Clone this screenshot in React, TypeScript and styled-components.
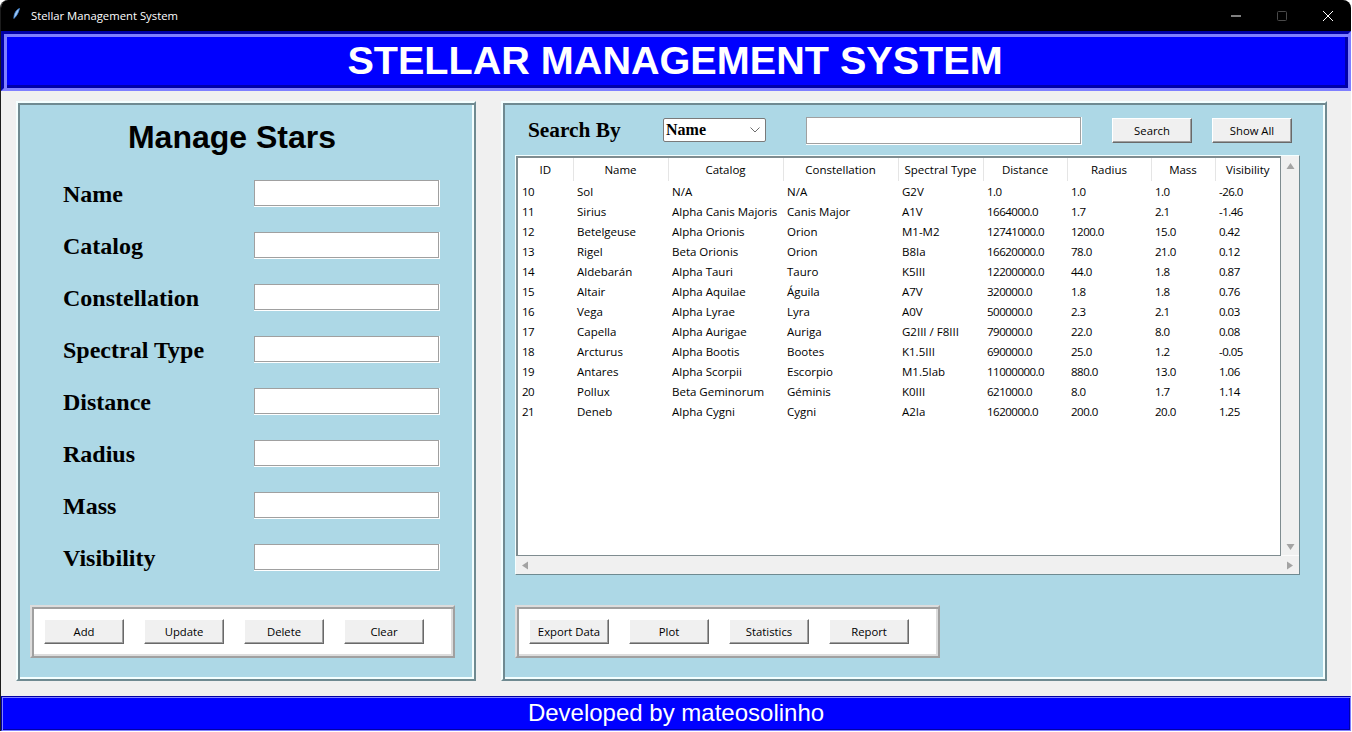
import React from "react";
import styled, { createGlobalStyle, css } from "styled-components";

const GlobalStyle = createGlobalStyle`
  * { box-sizing: border-box; }
  html, body { margin: 0; padding: 0; background: #fff; }
  body { font-family: "Open Sans", "Liberation Sans", sans-serif; }
`;

const ridge = (light: string, dark: string, size = 2) => css`
  border: ${size}px solid;
  border-color: ${light} ${dark} ${dark} ${light};
  box-shadow: inset ${size}px ${size}px 0 ${dark}, inset -${size}px -${size}px 0 ${light};
`;

const groove = (light: string, dark: string, size = 3) => css`
  border: ${size}px solid;
  border-color: ${dark} ${light} ${light} ${dark};
  box-shadow: inset ${size}px ${size}px 0 ${light}, inset -${size}px -${size}px 0 ${dark};
`;

const Window = styled.div`
  width: 1351px;
  height: 731px;
  display: flex;
  flex-direction: column;
  background: #f0f0f0;
  border-left: 1px solid #1c1c1c;
  border-radius: 8px 8px 0 0;
  overflow: hidden;
`;

const TitleBar = styled.div`
  height: 31px;
  flex: none;
  background: #000;
  color: #fff;
  display: flex;
  align-items: center;
  padding-left: 12px;
`;

const AppIcon = styled.svg`
  width: 7px;
  height: 11px;
  margin-right: 11px;
  margin-top: -4px;
`;

const WindowTitle = styled.span`
  flex: 1;
  font-family: "Open Sans", sans-serif;
  font-size: 11.3px;
`;

const WindowControl = styled.div`
  width: 46px;
  height: 31px;
  display: flex;
  align-items: center;
  justify-content: center;
`;

const Banner = styled.div`
  height: 60px;
  flex: none;
  background: #0000ff;
  ${groove("#7f7fff", "#0000a8")}
  color: #fff;
  font-family: "Liberation Sans", Arial, sans-serif;
  font-weight: 700;
  font-size: 39.6px;
  display: flex;
  align-items: center;
  justify-content: center;
  padding: 0 2px 2px 0;
`;

const Main = styled.div`
  flex: 1;
  display: flex;
  align-items: flex-start;
  gap: 25px;
  padding: 10px 0 0 15px;
`;

const Panel = styled.section<{ $width: number }>`
  width: ${(p) => p.$width}px;
  height: 580px;
  flex: none;
  background: #add8e6;
  ${ridge("#f4ffff", "#6f8a91")}
`;

const LeftPanel = styled(Panel)`
  display: flex;
  flex-direction: column;
  padding: 2px 2px 21px 12px;
`;

const PanelHeading = styled.h1`
  margin: 12px 0 0;
  padding-right: 38px;
  height: 51px;
  line-height: 40px;
  text-align: center;
  font-family: "Liberation Sans", Arial, sans-serif;
  font-weight: 700;
  font-size: 32px;
  color: #000;
`;

const FormRows = styled.div`
  padding: 0 0 0 33px;
`;

const FormRow = styled.div`
  height: 52px;
  display: grid;
  grid-template-columns: 191px 185px;
  align-items: center;
`;

const serifLabel = css`
  font-family: "Liberation Serif", "Times New Roman", serif;
  font-weight: 700;
  color: #000;
`;

const FieldLabel = styled.label`
  ${serifLabel}
  font-size: 24px;
`;

const TextField = styled.input`
  display: block;
  padding: 0 3px;
  border: 1px solid #a0a0a0;
  background: #fff;
  box-shadow: 0 1px 0 #fff, 1px 0 0 #fff, 1px 1px 0 #fff;
  outline: none;
`;

const FormField = styled(TextField)`
  width: 185px;
  height: 26px;
  margin-bottom: 2px;
`;

const ButtonFrame = styled.div<{ $width: number }>`
  width: ${(p) => p.$width}px;
  height: 53px;
  background: #fff;
  ${ridge("#dcdcdc", "#a0a0a0")}
  display: flex;
  align-items: center;
  gap: 20px;
  padding-left: 12px;
`;

const LeftButtons = styled(ButtonFrame)`
  margin-top: auto;
`;

const Button = styled.button`
  width: 80px;
  height: 25px;
  flex: none;
  padding: 0;
  background: #f0f0f0;
  border: 1px solid;
  border-color: #fff #696969 #696969 #fff;
  box-shadow: inset -1px -1px 0 #a0a0a0;
  font-family: "Open Sans", sans-serif;
  font-size: 11.3px;
  color: #000;
`;

const RightPanel = styled(Panel)`
  padding: 12px 0 0 12px;
  display: flex;
  flex-direction: column;
`;

const SearchBar = styled.div`
  display: flex;
  align-items: center;
  height: 30px;
  margin-bottom: 10px;
  padding-left: 13px;
`;

const SearchLabel = styled.span`
  ${serifLabel}
  font-size: 21.33px;
  width: 135px;
`;

const SelectBox = styled.div`
  width: 103px;
  height: 24px;
  background: #fff;
  border: 1px solid #7a7a7a;
  border-radius: 2px;
  display: flex;
  align-items: center;
  justify-content: space-between;
  padding: 0 5px 0 2px;
  ${serifLabel}
  font-size: 16px;
`;

const SearchField = styled(TextField)`
  width: 275px;
  height: 27px;
  margin-left: 40px;
`;

const ShowAllButton = styled(Button)`
  margin-left: 20px;
`;

const SearchButton = styled(Button)`
  margin-left: 31px;
`;

const TableFrame = styled.div`
  width: 785px;
  height: 420px;
  flex: none;
  background: #f0f0f0;
  border: 1px solid;
  border-color: #f4ffff #6f8a91 #6f8a91 #f4ffff;
  display: grid;
  grid-template-columns: 765px 18px;
  grid-template-rows: 400px 18px;
`;

const TreeArea = styled.div`
  background: #fff;
  border: 1px solid #7f8c90;
  border-width: 2px 1px 1px 2px;
  overflow: hidden;
`;

const StarTable = styled.table`
  border-collapse: collapse;
  table-layout: fixed;
  width: 762px;
  font-family: "Open Sans", sans-serif;
  font-size: 11.5px;
  color: #000;
`;

const HeadCell = styled.th`
  height: 23px;
  padding: 0;
  font-weight: 400;
  text-align: center;
  border-right: 1px solid #e5e5e5;
  &:last-child { border-right: 0; }
`;

const BodyCell = styled.td<{ $numeric: boolean }>`
  height: 20px;
  padding: 0 0 0 4px;
  white-space: nowrap;
  overflow: hidden;
  letter-spacing: ${(p) => (p.$numeric ? "-0.5px" : "normal")};
`;

const VerticalTrack = styled.div`
  display: flex;
  flex-direction: column;
  align-items: center;
  justify-content: space-between;
  padding: 5px 0;
  border-bottom: 1px solid #fbfbfb;
`;

const HorizontalTrack = styled.div`
  grid-column: 1 / span 2;
  display: flex;
  align-items: center;
  justify-content: space-between;
  padding: 0 4px;
`;

const ArrowIcon = styled.svg`
  width: 9px;
  height: 9px;
  fill: #a3a3a3;
  display: block;
`;

const RightButtons = styled(ButtonFrame)`
  margin-top: 30px;
`;

const Footer = styled.div`
  height: 35px;
  flex: none;
  margin-top: 15px;
  padding-bottom: 2px;
  background: #0000ff;
  ${groove("#7f7fff", "#0000a8", 1)}
  color: #fff;
  font-family: "Liberation Sans", Arial, sans-serif;
  font-size: 24px;
  display: flex;
  align-items: center;
  justify-content: center;
`;

const columns = [
  { label: "ID", width: 55 },
  { label: "Name", width: 95 },
  { label: "Catalog", width: 115 },
  { label: "Constellation", width: 115 },
  { label: "Spectral Type", width: 85 },
  { label: "Distance", width: 84 },
  { label: "Radius", width: 84 },
  { label: "Mass", width: 64 },
  { label: "Visibility", width: 65 },
];

const stars = [
  ["10", "Sol", "N/A", "N/A", "G2V", "1.0", "1.0", "1.0", "-26.0"],
  ["11", "Sirius", "Alpha Canis Majoris", "Canis Major", "A1V", "1664000.0", "1.7", "2.1", "-1.46"],
  ["12", "Betelgeuse", "Alpha Orionis", "Orion", "M1-M2", "12741000.0", "1200.0", "15.0", "0.42"],
  ["13", "Rigel", "Beta Orionis", "Orion", "B8Ia", "16620000.0", "78.0", "21.0", "0.12"],
  ["14", "Aldebarán", "Alpha Tauri", "Tauro", "K5III", "12200000.0", "44.0", "1.8", "0.87"],
  ["15", "Altair", "Alpha Aquilae", "Águila", "A7V", "320000.0", "1.8", "1.8", "0.76"],
  ["16", "Vega", "Alpha Lyrae", "Lyra", "A0V", "500000.0", "2.3", "2.1", "0.03"],
  ["17", "Capella", "Alpha Aurigae", "Auriga", "G2III / F8III", "790000.0", "22.0", "8.0", "0.08"],
  ["18", "Arcturus", "Alpha Bootis", "Bootes", "K1.5III", "690000.0", "25.0", "1.2", "-0.05"],
  ["19", "Antares", "Alpha Scorpii", "Escorpio", "M1.5Iab", "11000000.0", "880.0", "13.0", "1.06"],
  ["20", "Pollux", "Beta Geminorum", "Géminis", "K0III", "621000.0", "8.0", "1.7", "1.14"],
  ["21", "Deneb", "Alpha Cygni", "Cygni", "A2Ia", "1620000.0", "200.0", "20.0", "1.25"],
];

const formFields = ["Name", "Catalog", "Constellation", "Spectral Type", "Distance", "Radius", "Mass", "Visibility"];

const Arrow = ({ points }: { points: string }) => (
  <ArrowIcon viewBox="0 0 9 9">
    <polygon points={points} />
  </ArrowIcon>
);

const App = () => (
  <Window>
    <GlobalStyle />
    <TitleBar>
      <AppIcon viewBox="0 0 7 11">
        <path d="M6.5 0.5C3.5 1.5 1 5 0.8 10.5C3 9 5.5 5 6.5 0.5Z" fill="#9fc8f5" stroke="#3f86d8" strokeWidth="0.8" />
      </AppIcon>
      <WindowTitle>Stellar Management System</WindowTitle>
      <WindowControl>
        <svg width="10" height="10" viewBox="0 0 10 10">
          <path d="M0 5H10" stroke="#fff" />
        </svg>
      </WindowControl>
      <WindowControl>
        <svg width="10" height="10" viewBox="0 0 10 10">
          <rect x="0.5" y="0.5" width="9" height="9" rx="1" fill="none" stroke="#4a4a4a" />
        </svg>
      </WindowControl>
      <WindowControl>
        <svg width="10" height="10" viewBox="0 0 10 10">
          <path d="M0 0L10 10M10 0L0 10" stroke="#fff" />
        </svg>
      </WindowControl>
    </TitleBar>
    <Banner>STELLAR MANAGEMENT SYSTEM</Banner>
    <Main>
      <LeftPanel $width={460}>
        <PanelHeading>Manage Stars</PanelHeading>
        <FormRows>
          {formFields.map((field) => (
            <FormRow key={field}>
              <FieldLabel>{field}</FieldLabel>
              <FormField />
            </FormRow>
          ))}
        </FormRows>
        <LeftButtons $width={425}>
          <Button>Add</Button>
          <Button>Update</Button>
          <Button>Delete</Button>
          <Button>Clear</Button>
        </LeftButtons>
      </LeftPanel>
      <RightPanel $width={826}>
        <SearchBar>
          <SearchLabel>Search By</SearchLabel>
          <SelectBox>
            Name
            <svg width="10" height="6" viewBox="0 0 10 6">
              <path d="M0.5 0.5L5 5L9.5 0.5" fill="none" stroke="#6d6d6d" />
            </svg>
          </SelectBox>
          <SearchField />
          <SearchButton>Search</SearchButton>
          <ShowAllButton>Show All</ShowAllButton>
        </SearchBar>
        <TableFrame>
          <TreeArea>
            <StarTable>
              <colgroup>
                {columns.map((col) => (
                  <col key={col.label} width={col.width} />
                ))}
              </colgroup>
              <thead>
                <tr>
                  {columns.map((col) => (
                    <HeadCell key={col.label}>{col.label}</HeadCell>
                  ))}
                </tr>
              </thead>
              <tbody>
                {stars.map((star) => (
                  <tr key={star[0]}>
                    {star.map((value, index) => (
                      <BodyCell key={index} $numeric={index >= 5 || index === 0}>
                        {value}
                      </BodyCell>
                    ))}
                  </tr>
                ))}
              </tbody>
            </StarTable>
          </TreeArea>
          <VerticalTrack>
            <Arrow points="0.5,8 4.5,2 8.5,8" />
            <Arrow points="0.5,3 4.5,9 8.5,3" />
          </VerticalTrack>
          <HorizontalTrack>
            <Arrow points="8,0.5 2,4.5 8,8.5" />
            <Arrow points="1,0.5 7,4.5 1,8.5" />
          </HorizontalTrack>
        </TableFrame>
        <RightButtons $width={425}>
          <Button>Export Data</Button>
          <Button>Plot</Button>
          <Button>Statistics</Button>
          <Button>Report</Button>
        </RightButtons>
      </RightPanel>
    </Main>
    <Footer>Developed by mateosolinho</Footer>
  </Window>
);

export default App;
